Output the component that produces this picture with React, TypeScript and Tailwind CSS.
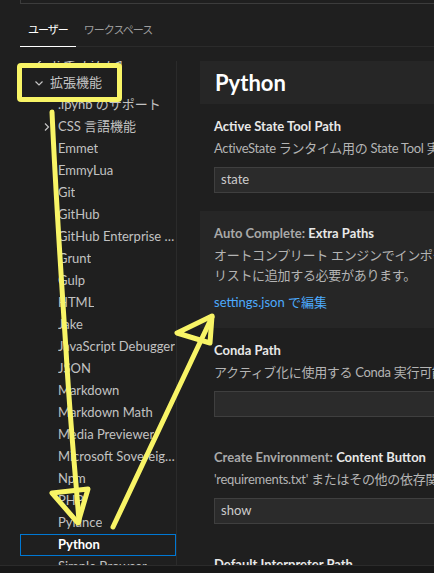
import { ReactNode } from 'react';

type TocItem = {
  label: string;
  level: 1 | 2;
  chevron?: 'down' | 'right';
  selected?: boolean;
};

const tocItems: TocItem[] = [
  { label: 'セキュリティ', level: 1, chevron: 'right' },
  { label: '拡張機能', level: 1, chevron: 'down' },
  { label: '.ipynb のサポート', level: 2 },
  { label: 'CSS 言語機能', level: 2, chevron: 'right' },
  { label: 'Emmet', level: 2 },
  { label: 'EmmyLua', level: 2 },
  { label: 'Git', level: 2 },
  { label: 'GitHub', level: 2 },
  { label: 'GitHub Enterprise Server 認証プロバイダー', level: 2 },
  { label: 'Grunt', level: 2 },
  { label: 'Gulp', level: 2 },
  { label: 'HTML', level: 2 },
  { label: 'Jake', level: 2 },
  { label: 'JavaScript Debugger', level: 2 },
  { label: 'JSON', level: 2 },
  { label: 'Markdown', level: 2 },
  { label: 'Markdown Math', level: 2 },
  { label: 'Media Previewer', level: 2 },
  { label: 'Microsoft Sovereign Cloud', level: 2 },
  { label: 'Npm', level: 2 },
  { label: 'PHP', level: 2 },
  { label: 'Pylance', level: 2 },
  { label: 'Python', level: 2, selected: true },
  { label: 'Simple Browser', level: 2 },
];

function Chevron({ dir }: { dir: 'down' | 'right' }) {
  return (
    <svg width="16" height="16" viewBox="0 0 16 16" fill="none" stroke="#c5c5c5" strokeWidth="1.2">
      {dir === 'down' ? <path d="M4.5 6.5 8 10l3.5-3.5" /> : <path d="M6 4.5 9.5 8 6 11.5" />}
    </svg>
  );
}

function TocRow({ item }: { item: TocItem }) {
  return (
    <div
      className={`flex h-[22px] items-center pr-px ${item.level === 1 ? 'pl-[11px]' : 'pl-[19px]'} ${
        item.selected ? 'border border-[#0078d4]' : ''
      }`}
    >
      <div className={`w-[16px] shrink-0 ${item.selected ? '-ml-px' : ''}`}>
        {item.chevron && <Chevron dir={item.chevron} />}
      </div>
      <span
        className={`ml-[3px] truncate ${item.selected ? 'font-bold text-white' : 'text-[#c2c2c2]'}`}
      >
        {item.label}
      </span>
    </div>
  );
}

function SettingInput({ value }: { value?: string }) {
  return (
    <div className="mt-[9px] flex h-[26px] w-[420px] items-center border border-[#3f3f3f] bg-[#2b2b2b] px-[6px] text-[#cccccc]">
      {value}
    </div>
  );
}

function Setting({
  category,
  title,
  lines,
  children,
  focused,
}: {
  category?: string;
  title: string;
  lines: string[];
  children: ReactNode;
  focused?: boolean;
}) {
  return (
    <div className={`pl-[14px] pt-[12px] ${focused ? 'bg-[#262626] pb-[16px]' : 'pb-[18px]'}`}>
      <div className="whitespace-nowrap font-bold leading-[20px]">
        {category && <span className="text-[#a9a9a9]">{category}</span>}
        <span className="text-[#e8e8e8]">{title}</span>
      </div>
      <div className="mt-[2px] tracking-[-0.3px] text-[#b4b4b4]">
        {lines.map(l => (
          <div key={l} className="whitespace-nowrap leading-[20px]">{l}</div>
        ))}
      </div>
      {children}
    </div>
  );
}

export default function App() {
  return (
    <div
      className="relative h-[573px] w-[434px] overflow-hidden bg-[#1f1f1f] text-[13px]"
      style={{ fontFamily: 'Lato, "Noto Sans CJK JP", sans-serif' }}
    >
      {/* Search box (scrolled off) */}
      <div className="ml-[20px] h-[4px] border-b border-l border-[#3c3c3c]" />

      {/* Tabs */}
      <div className="ml-[20px] flex h-[43px] items-end border-b border-[#2b2b2b]">
        <div className="-mb-px border-b border-white px-[8px] pb-[8px] text-[11px] leading-[16px] tracking-[-1px] text-white">
          ユーザー
        </div>
        <div className="px-[8px] pb-[8px] text-[11px] leading-[16px] tracking-[-1px] text-[#9d9d9d]">
          ワークスペース
        </div>
      </div>

      {/* Body */}
      <div className="mt-[14px] flex h-[504px]">
        <div className="ml-[20px] w-[157px] shrink-0 overflow-hidden border-r border-[#2b2b2b]">
          <div className="-mt-[11px]">
            {tocItems.map(item => (
              <TocRow key={item.label} item={item} />
            ))}
          </div>
        </div>

        <div className="ml-[23px] min-w-0 flex-1 overflow-hidden">
          <div className="flex h-[43px] items-center bg-[#262626] pl-[15px] text-[22px] font-bold text-white">
            Python
          </div>

          <Setting title="Active State Tool Path" lines={['ActiveState ランタイム用の State Tool 実行可能ファイルへのパス (バージョン 0.36 以降)。']}>
            <SettingInput value="state" />
          </Setting>

          <Setting
            focused
            category="Auto Complete: "
            title="Extra Paths"
            lines={[
              'オートコンプリート エンジンでインポートする必要がある追加パッケージの場所を',
              'リストに追加する必要があります。',
            ]}
          >
            <div className="mt-[7px] whitespace-nowrap leading-[20px] text-[#4daafc]">settings.json で編集</div>
          </Setting>

          <Setting title="Conda Path" lines={['アクティブ化に使用する Conda 実行可能ファイルへのパス (バージョン 4.4 以降)。']}>
            <SettingInput />
          </Setting>

          <Setting
            category="Create Environment: "
            title="Content Button"
            lines={["'requirements.txt' またはその他の依存関係ファイルを開いたときに、環境の作成ボタンを表示します。"]}
          >
            <SettingInput value="show" />
          </Setting>

          <Setting title="Default Interpreter Path" lines={['Python インタープリターへのパス。']}>
            <SettingInput value="python" />
          </Setting>
        </div>
      </div>

      <div className="h-[8px] border-t border-[#2b2b2b] bg-[#181818]" />

      {/* Yellow annotations */}
      <svg
        className="pointer-events-none absolute inset-0"
        width="434"
        height="573"
        viewBox="0 0 434 573"
        fill="none"
        stroke="#f8f466"
        strokeWidth="5"
        strokeLinecap="round"
        strokeLinejoin="round"
      >
        <rect x="19.5" y="65.5" width="100" height="34" rx="1.5" />
        <path d="M52 112 C56 200 62 290 66 350 C70 420 75 470 79 521" />
        <path d="M52 493 L88 489 L78 523 Z" />
        <path d="M113 527 L212 317" />
        <path d="M212 316 L177 333 L210 343 Z" />
      </svg>
    </div>
  );
}
